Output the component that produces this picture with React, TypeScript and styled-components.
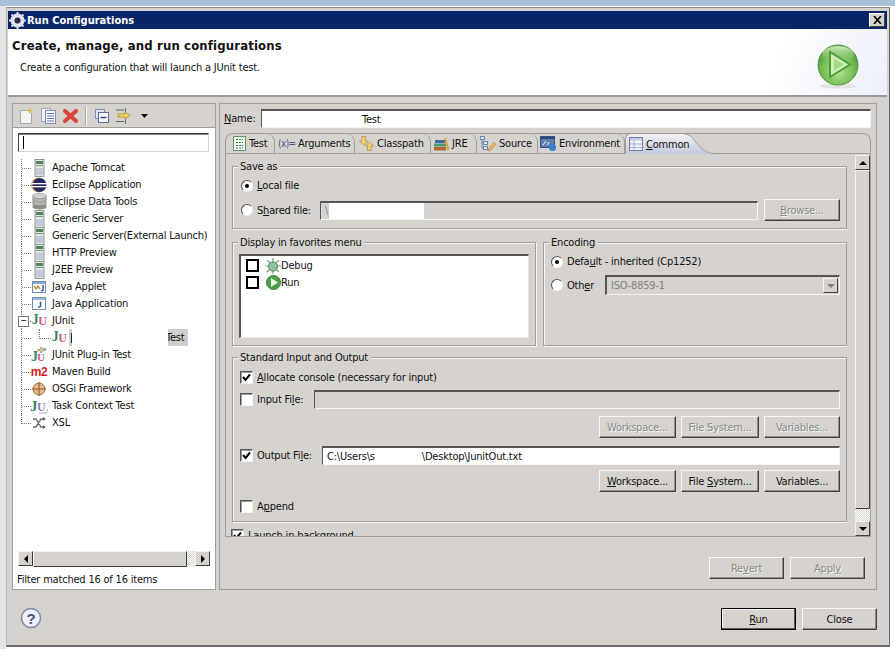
import React from 'react';
import styled, { createGlobalStyle } from 'styled-components';

const FACE = '#d6d3ce';
const EDGE = '#a09f9a';

const GlobalStyle = createGlobalStyle`
  html, body {
    margin: 0;
    width: 895px;
    height: 649px;
    overflow: hidden;
    background: #fff;
  }
  * {
    box-sizing: border-box;
  }
  u {
    text-underline-offset: 1px;
  }
`;

const Page = styled.div`
  width: 895px;
  height: 649px;
  padding: 7px 5px 2px 6px;
  background: linear-gradient(#a9c2da 0 6px, transparent 6px),
    linear-gradient(90deg, #e3e3e1 0 6px, transparent 6px);
  font: 11px 'DejaVu Sans Condensed', 'DejaVu Sans', sans-serif;
  letter-spacing: -0.2px;
  color: #111;
`;

const Window = styled.div`
  height: 100%;
  display: flex;
  flex-direction: column;
  padding: 3px 2px 0 1px;
  background: ${FACE};
  border: 1px solid #6b6b6b;
  border-left-color: #b9b9b9;
  border-top-color: #8b8b8b;
  border-bottom-width: 2px;
`;

const TitleBar = styled.div`
  height: 18px;
  flex: none;
  display: flex;
  align-items: center;
  gap: 1px;
  padding: 0 2px 0 1px;
  background: #0a2468;
  color: #fff;
  font-weight: bold;
  letter-spacing: 0;
`;

const TitleText = styled.span`
  flex: 1;
`;

const CloseBox = styled.div`
  width: 16px;
  height: 14px;
  display: flex;
  align-items: center;
  justify-content: center;
  background: ${FACE};
  border: 1px solid;
  border-color: #fff #404040 #404040 #fff;
`;

const Banner = styled.div`
  height: 68px;
  flex: none;
  display: flex;
  align-items: flex-start;
  justify-content: space-between;
  padding: 8px 26px 0 4px;
  background: linear-gradient(115deg, #fff 0 86%, #eceef9 100%);
  border-bottom: 2px solid #9a9a96;
`;

const BannerText = styled.div`
  display: flex;
  flex-direction: column;
`;

const BannerTitle = styled.div`
  font-weight: bold;
  font-size: 13px;
  line-height: 17px;
  letter-spacing: 0.15px;
`;

const BannerDesc = styled.div`
  margin: 6px 0 0 8px;
  line-height: 15px;
`;

const BadgeSlot = styled.div`
  margin-top: 6px;
  line-height: 0;
`;

const Main = styled.div`
  height: 487px;
  flex: none;
  display: flex;
  gap: 3px;
  margin: 6px 10px 0 4px;
`;

const LeftPanel = styled.div`
  width: 204px;
  flex: none;
  display: flex;
  flex-direction: column;
  background: #fff;
  border: 1px solid ${EDGE};
`;

const ToolBar = styled.div`
  height: 24px;
  flex: none;
  display: flex;
  align-items: center;
  padding-left: 6px;
  background: ${FACE};
  border-bottom: 1px solid ${EDGE};
`;

const ToolSlot = styled.span<{ $width: number }>`
  width: ${(p) => p.$width}px;
  flex: none;
  display: flex;
  align-items: center;
`;

const ToolSep = styled.span`
  width: 2px;
  height: 20px;
  flex: none;
  margin: 0 8px 0 6px;
  background: linear-gradient(90deg, #a9a8a4 50%, #fff 50%);
`;

const FilterInput = styled.div`
  height: 19px;
  flex: none;
  margin: 5px 6px 0 5px;
  padding: 2px 0 0 4px;
  border: 1px solid;
  border-color: #3e3e3e #d6d3ce #d6d3ce #3e3e3e;
  box-shadow: inset 0 1px 0 #808080;
`;

const Caret = styled.span`
  display: block;
  width: 1px;
  height: 13px;
  background: #000;
`;

const Tree = styled.div`
  flex: 1;
  min-height: 0;
  padding: 7px 0 0 8px;
`;

const TreeRow = styled.div`
  height: 17px;
  display: flex;
  align-items: center;
  white-space: nowrap;
`;

const Connector = styled.div<{ $last?: boolean; $expander?: boolean; $width?: number }>`
  position: relative;
  width: ${(p) => p.$width ?? 10}px;
  height: 17px;
  flex: none;
  border-left: 1px dotted #777;
  border-left-style: ${(p) => (p.$last ? 'none' : 'dotted')};

  &::after {
    content: '';
    display: block;
    height: 9px;
    border-bottom: 1px dotted #777;
    border-left: ${(p) => (p.$last ? '1px dotted #777' : 'none')};
  }

  ${(p) =>
    p.$expander &&
    `&::before {
      content: '−';
      position: absolute;
      left: -4px;
      top: 4px;
      width: 9px;
      height: 9px;
      background: #fff;
      border: 1px solid #777;
      font-size: 9px;
      line-height: 7px;
      text-align: center;
    }`}
`;

const TreeIcon = styled.span`
  width: 16px;
  height: 17px;
  flex: none;
  display: flex;
  align-items: center;
  justify-content: center;
  margin-right: 5px;

  & > * {
    flex: none;
  }
`;

const TreeIndent = styled.span`
  width: 8px;
  flex: none;
`;

const GapLabel = styled.span`
  display: flex;
  align-items: center;
  height: 17px;
  margin-left: -3px;
`;

const SelectMark = styled.span`
  width: 3px;
  height: 17px;
  background: linear-gradient(#222, #222) 2px 4px / 1px 10px no-repeat, #cfcecb;
`;

const SelectGap = styled.span`
  width: 96px;
`;

const SelectTail = styled.span`
  width: 20px;
  height: 17px;
  line-height: 17px;
  overflow: hidden;
  text-indent: -2px;
  background: #cfcecb;
`;

const HScroll = styled.div`
  height: 16px;
  flex: none;
  display: flex;
  margin: 0 5px 0 5px;
`;

const ScrollButton = styled.div`
  width: 15px;
  height: 15px;
  flex: none;
  display: flex;
  align-items: center;
  justify-content: center;
  background: ${FACE};
  border: 1px solid;
  border-color: #f4f3f1 #404040 #404040 #f4f3f1;
`;

const ScrollThumb = styled.div`
  flex: 1;
  background: ${FACE};
  border: 1px solid;
  border-color: #f4f3f1 #404040 #404040 #f4f3f1;
`;

const ScrollTrack = styled.div<{ $size: number; $vertical?: boolean }>`
  ${(p) => (p.$vertical ? 'height' : 'width')}: ${(p) => p.$size}px;
  flex: none;
  background: repeating-conic-gradient(#d6d3ce 0 25%, #fff 0 50%) 0 0 / 2px 2px;
`;

const FilterStatus = styled.div`
  height: 22px;
  flex: none;
  padding: 5px 0 0 4px;
  line-height: 15px;
`;

const RightPanel = styled.div`
  flex: 1;
  min-width: 0;
  display: flex;
  flex-direction: column;
  padding: 5px 5px 0 5px;
  border: 1px solid ${EDGE};
`;

const NameRow = styled.div`
  height: 19px;
  flex: none;
  display: flex;
  align-items: center;
  margin-left: -1px;
`;

const NameLabel = styled.span`
  width: 37px;
  flex: none;
`;

const TextField = styled.div<{ $disabled?: boolean; $width?: number; $pad?: number }>`
  height: 19px;
  display: flex;
  align-items: center;
  ${(p) => (p.$width ? `width: ${p.$width}px; flex: none;` : 'flex: 1; min-width: 0;')}
  padding-left: ${(p) => p.$pad ?? 4}px;
  background: ${(p) => (p.$disabled ? FACE : '#fff')};
  color: ${(p) => (p.$disabled ? '#808080' : '#111')};
  border: 1px solid;
  border-color: #555 #f5f5f3 #f5f5f3 #555;
  border-top-width: 2px;
  white-space: nowrap;
  overflow: hidden;
`;

const MaskBlock = styled.span`
  width: 95px;
  height: 16px;
  flex: none;
  margin-left: 1px;
  background: #fff;
`;

const OutputGap = styled.span`
  width: 47px;
  flex: none;
`;

const Folder = styled.div`
  height: 404px;
  flex: none;
  display: flex;
  flex-direction: column;
  margin-top: 5px;
  border: 1px solid ${EDGE};
  border-top: none;
  border-radius: 8px 8px 0 0;
`;

const TabStrip = styled.div`
  height: 21px;
  flex: none;
  display: flex;
  align-items: stretch;
  border: 1px solid ${EDGE};
  border-width: 1px 0 1px 0;
  border-radius: 8px 8px 0 0;
`;

const Tab = styled.div<{ $width: number; $pad: number }>`
  width: ${(p) => p.$width}px;
  flex: none;
  display: flex;
  align-items: center;
  gap: 3px;
  padding-left: ${(p) => p.$pad}px;
  white-space: nowrap;
  border-right: 1px solid ${EDGE};
  border-top-right-radius: 8px;
`;

const ActiveTab = styled.div`
  position: relative;
  width: 60px;
  flex: none;
  display: flex;
  align-items: center;
  gap: 3px;
  margin: -1px 0 -1px 0;
  padding-left: 3px;
  border-left: 1px solid ${EDGE};
  border-top: 1px solid ${EDGE};
  border-top-left-radius: 6px;
  background: linear-gradient(#f2f2f4, #c4c8dc);

  & > svg {
    flex: none;
  }
`;

const ActiveLabel = styled.span`
  position: relative;
  z-index: 1;
  flex: none;
  white-space: nowrap;
`;

const TabTail = styled.svg`
  position: absolute;
  left: 58px;
  top: -1px;
`;

const FolderBody = styled.div`
  flex: 1;
  min-height: 0;
  display: flex;
  gap: 8px;
  padding: 1px 0 0 0;
`;

const ScrollArea = styled.div`
  flex: 1;
  min-width: 0;
  overflow: hidden;
  padding: 11px 0 0 6px;
`;

const VScroll = styled.div`
  width: 15px;
  flex: none;
  display: flex;
  flex-direction: column;
`;

const Group = styled.div<{ $height: number; $top?: number; $width?: number; $padLeft?: number }>`
  position: relative;
  height: ${(p) => p.$height}px;
  margin-top: ${(p) => p.$top ?? 0}px;
  ${(p) => (p.$width ? `width: ${p.$width}px; flex: none;` : 'flex: 1; min-width: 0;')}
  padding: 9px 6px 0 ${(p) => p.$padLeft ?? 8}px;
  border: 1px solid ${EDGE};
  box-shadow: 1px 1px 0 #f6f6f4, inset 1px 1px 0 #f6f6f4;
`;

const Legend = styled.span`
  position: absolute;
  left: 5px;
  top: -8px;
  padding: 0 3px 0 2px;
  line-height: 15px;
  background: ${FACE};
`;

const GroupPair = styled.div`
  display: flex;
  gap: 7px;
  margin-top: 13px;
`;

const OptionRow = styled.div<{ $height?: number; $top?: number }>`
  height: ${(p) => p.$height ?? 19}px;
  margin-top: ${(p) => p.$top ?? 0}px;
  display: flex;
  align-items: center;
  white-space: nowrap;
`;

const Radio = styled.span<{ $on?: boolean }>`
  width: 12px;
  height: 12px;
  flex: none;
  margin-right: 4px;
  border-radius: 50%;
  display: flex;
  align-items: center;
  justify-content: center;
  background: #fff;
  border: 1px solid;
  border-color: #555 #f4f4f2 #f4f4f2 #555;

  &::after {
    content: '';
    display: ${(p) => (p.$on ? 'block' : 'none')};
    width: 4px;
    height: 4px;
    border-radius: 50%;
    background: #000;
  }
`;

const Check = styled.span`
  width: 13px;
  height: 13px;
  flex: none;
  margin: 0 4px 0 -1px;
  display: flex;
  align-items: center;
  justify-content: center;
  background: #fff;
  border: 1px solid;
  border-color: #555 #f4f4f2 #f4f4f2 #555;
  box-shadow: inset 1px 1px 0 #999;
`;

const FieldLabel = styled.span<{ $width: number }>`
  width: ${(p) => p.$width}px;
  flex: none;
`;

const FavoritesList = styled.div`
  height: 84px;
  width: 290px;
  margin: 2px 0 0 -2px;
  padding: 1px 0 0 5px;
  background: #fff;
  border: 1px solid;
  border-color: #555 #e8e8e6 #e8e8e6 #555;
  border-top-width: 2px;
  border-left-width: 2px;
`;

const FavRow = styled.div`
  height: 17px;
  display: flex;
  align-items: center;
`;

const FavBox = styled.span`
  width: 13px;
  height: 13px;
  flex: none;
  margin-right: 6px;
  border: 2px solid #000;
`;

const FavIcon = styled.span`
  width: 16px;
  height: 16px;
  flex: none;
  display: flex;
  align-items: center;
  justify-content: center;
`;

const Combo = styled.div`
  width: 235px;
  height: 20px;
  flex: none;
  display: flex;
  align-items: center;
  justify-content: space-between;
  padding: 0 1px 0 4px;
  color: #808080;
  border: 1px solid;
  border-color: #555 #f5f5f3 #f5f5f3 #555;
  border-top-width: 2px;
  border-left-width: 2px;
`;

const ComboArrow = styled.span`
  width: 15px;
  height: 15px;
  display: flex;
  align-items: center;
  justify-content: center;
  border: 1px solid;
  border-color: #f4f3f1 #404040 #404040 #f4f3f1;
`;

const ButtonRow = styled.div<{ $top?: number }>`
  display: flex;
  justify-content: flex-end;
  gap: 5px;
  margin-top: ${(p) => p.$top ?? 0}px;
`;

const Button = styled.button<{ $disabled?: boolean; $primary?: boolean; $width?: number; $left?: number }>`
  width: ${(p) => p.$width ?? 76}px;
  height: 22px;
  flex: none;
  margin-left: ${(p) => p.$left ?? 0}px;
  padding: 0;
  background: ${FACE};
  font: inherit;
  letter-spacing: inherit;
  color: ${(p) => (p.$disabled ? '#8a8a86' : '#111')};
  text-shadow: ${(p) => (p.$disabled ? '1px 1px 0 #f4f4f2' : 'none')};
  border: 1px solid;
  border-color: ${(p) => (p.$primary ? '#000' : '#f6f6f4 #404040 #404040 #f6f6f4')};
  box-shadow: ${(p) => (p.$primary ? 'inset -1px -1px 0 #555, inset 1px 1px 0 #f6f6f4' : 'inset -1px -1px 0 #8c8b87')};
`;

const ApplyRow = styled.div`
  display: flex;
  justify-content: flex-end;
  gap: 6px;
  margin: 20px 6px 0 0;
`;

const Footer = styled.div`
  flex: 1;
  display: flex;
  align-items: flex-start;
  justify-content: space-between;
  padding: 18px 10px 0 12px;
`;

const FooterButtons = styled.div`
  display: flex;
  gap: 6px;
`;

const HelpSlot = styled.div`
  margin-top: -1px;
  line-height: 0;
`;

const JuMark = styled.span`
  display: inline-flex;
  font: bold 13px 'Liberation Serif', serif;
  letter-spacing: -0.5px;

  b:first-child {
    color: #35876a;
    font-size: 14px;
  }
  b:last-child {
    color: #c4627a;
    font-size: 12px;
    margin-top: 2px;
  }
`;

const MavenMark = styled.span`
  font: bold 12px 'Liberation Sans', sans-serif;
  color: #d81e1e;
  letter-spacing: -0.5px;
`;

const ArgsMark = styled.span`
  width: 17px;
  flex: none;
  color: #465c8c;
  font-size: 10px;
  letter-spacing: -0.6px;
`;

const Server = () => (
  <svg width="11" height="18" viewBox="0 0 11 18">
    <rect x="1" y="0.5" width="9" height="17" fill="#dfe6df" stroke="#8d9a90" />
    <rect x="2" y="2" width="7" height="3" fill="#57805f" />
    <rect x="2" y="6" width="7" height="1" fill="#7b9480" />
    <rect x="2" y="9" width="7" height="7" fill="#c4c8da" />
  </svg>
);

const EclipseLogo = () => (
  <svg width="16" height="16" viewBox="0 0 16 16">
    <circle cx="7.5" cy="8" r="7.5" fill="#e8a56c" />
    <circle cx="8.5" cy="8" r="7" fill="#27275f" />
    <rect x="1" y="6" width="15" height="1.3" fill="#fff" />
    <rect x="1" y="9" width="15" height="1.3" fill="#fff" />
  </svg>
);

const DataTools = () => (
  <svg width="15" height="17" viewBox="0 0 15 17">
    <rect x="0.5" y="2.5" width="14" height="12" fill="#a8aaa6" />
    <ellipse cx="7.5" cy="14" rx="7" ry="2.6" fill="#8b8d89" />
    <ellipse cx="7.5" cy="10" rx="7" ry="2.6" fill="#b4b6b2" stroke="#7f817d" strokeWidth="0.5" />
    <ellipse cx="7.5" cy="6.5" rx="7" ry="2.6" fill="#b4b6b2" stroke="#7f817d" strokeWidth="0.5" />
    <ellipse cx="7.5" cy="3" rx="7" ry="2.6" fill="#d4d5d2" stroke="#7f817d" strokeWidth="0.5" />
  </svg>
);

const AppletIcon = () => (
  <svg width="14" height="12" viewBox="0 0 14 12">
    <rect x="0.5" y="0.5" width="13" height="11" fill="#fff" stroke="#6f8db3" />
    <rect x="1" y="1" width="12" height="2" fill="#89a7cc" />
    <path d="M2 5 L4 8 L6 5 L8 8" fill="none" stroke="#b9902f" strokeWidth="1.4" />
    <path d="M11 4 V9 Q11 10 9 10" fill="none" stroke="#2c4f86" strokeWidth="1.4" />
  </svg>
);

const JavaAppIcon = () => (
  <svg width="14" height="13" viewBox="0 0 14 13">
    <rect x="0.5" y="0.5" width="13" height="12" fill="#fff" stroke="#6f8db3" />
    <rect x="1" y="1" width="12" height="2" fill="#9ab5d5" />
    <path d="M8.5 4.5 V9 Q8.5 10.5 6 10" fill="none" stroke="#2c5d98" strokeWidth="1.5" />
  </svg>
);

const PluginJu = () => (
  <svg width="16" height="17" viewBox="0 0 16 17">
    <text x="0" y="15" fontFamily="Liberation Serif" fontWeight="bold" fontSize="14" fill="#35876a">J</text>
    <text x="6" y="15" fontFamily="Liberation Serif" fontWeight="bold" fontSize="11" fill="#c4627a">U</text>
    <path d="M6 4 H9" stroke="#8a8a6a" />
    <path d="M10 1 L13 4 L10 7 L8 4 Z" fill="#e7c76b" stroke="#8a8a6a" strokeWidth="0.6" />
    <circle cx="13.5" cy="3.5" r="1.8" fill="#8fa9d6" />
  </svg>
);

const Osgi = () => (
  <svg width="14" height="14" viewBox="0 0 14 14">
    <circle cx="7" cy="7" r="6" fill="#e1b98a" stroke="#a36a35" />
    <path d="M7 0 V14 M0 7 H14" stroke="#8f5a2a" />
  </svg>
);

const TaskJu = () => (
  <svg width="18" height="16" viewBox="0 0 18 16">
    <text x="0" y="13" fontFamily="Liberation Serif" fontWeight="bold" fontSize="15" fill="#35876a">J</text>
    <text x="7" y="13" fontFamily="Liberation Serif" fontWeight="bold" fontSize="12" fill="#8c7bb6">U</text>
    <path d="M9 15 H16 L18 11" fill="none" stroke="#b3a6d1" />
  </svg>
);

const Xsl = () => (
  <svg width="14" height="12" viewBox="0 0 14 12">
    <path d="M1 2 H4 L9 10 H13 M1 10 H4 L9 2 H13" fill="none" stroke="#6b6b68" strokeWidth="1.4" />
    <path d="M11 0 L14 2 L11 4 Z M11 8 L14 10 L11 12 Z" fill="#6b6b68" />
  </svg>
);

const AppIcon = () => (
  <svg width="17" height="17" viewBox="0 0 17 17">
    <circle cx="8.5" cy="8.5" r="5.5" fill="#d9dbe8" stroke="#e8e8f0" strokeWidth="3" />
    <circle cx="8.5" cy="8.5" r="3" fill="#2a2a44" />
    <path d="M8.5 0 V4 M8.5 13 V17 M0 8.5 H4 M13 8.5 H17 M2.500 2.500 L5 5 M14.500 2.500 L12 5 M2.500 14.500 L5 12 M14.500 14.500 L12 12" stroke="#d9dbe8" strokeWidth="2" />
  </svg>
);

const ToolNew = () => (
  <svg width="14" height="16" viewBox="0 0 14 16">
    <path d="M1.5 2.5 H9 L12.5 6 V15.5 H1.5 Z" fill="#f6f6f0" stroke="#9fa8b8" />
    <path d="M11 0 V5 M8.5 2.5 H13.5" stroke="#e3c04b" strokeWidth="1.3" />
  </svg>
);

const ToolCopy = () => (
  <svg width="15" height="16" viewBox="0 0 15 16">
    <rect x="0.5" y="0.5" width="9" height="13" fill="#f0f2f8" stroke="#9fa8b8" />
    <rect x="4.5" y="2.5" width="10" height="13" fill="#f6f7fb" stroke="#8090b0" />
    <path d="M6 5.5 H13 M6 8 H13 M6 10.5 H13 M6 13 H13" stroke="#5b78b5" />
  </svg>
);

const ToolDelete = () => (
  <svg width="15" height="14" viewBox="0 0 15 14">
    <path d="M2 2 L13 12 M13 2 L2 12" stroke="#d9453d" strokeWidth="4" strokeLinecap="round" />
  </svg>
);

const ToolCollapse = () => (
  <svg width="14" height="14" viewBox="0 0 14 14">
    <rect x="0.5" y="0.5" width="9" height="9" fill="#dfe5f0" stroke="#7d93b8" />
    <rect x="3.5" y="3.5" width="10" height="10" fill="#f4f6fa" stroke="#566f9c" />
    <path d="M5.5 8.5 H11.5" stroke="#2d3f66" strokeWidth="1.4" />
  </svg>
);

const ToolFilter = () => (
  <svg width="17" height="16" viewBox="0 0 17 16">
    <path d="M0 2 H8 M0 13.500 H8 M9.500 0 V4 M9.500 11 V16" stroke="#5b6675" />
    <path d="M2 6 H9 V4 L14 7.500 L9 11 V9 H2 Z" fill="#f0d468" stroke="#a88a2a" strokeWidth="0.8" />
  </svg>
);

const DownCaret = () => (
  <svg width="7" height="4" viewBox="0 0 7 4">
    <path d="M0 0 H7 L3.500 4 Z" fill="#111" />
  </svg>
);

const Arrow = ({ dir, color = '#000' }: { dir: 'up' | 'down' | 'left' | 'right'; color?: string }) => {
  const d = {
    up: 'M0 6 H8 L4 2 Z',
    down: 'M0 2 H8 L4 6 Z',
    left: 'M6 0 V8 L2 4 Z',
    right: 'M2 0 V8 L6 4 Z',
  }[dir];
  return (
    <svg width="8" height="8" viewBox="0 0 8 8">
      <path d={d} fill={color} />
    </svg>
  );
};

const TabTest = () => (
  <svg width="13" height="15" viewBox="0 0 13 15">
    <rect x="0.5" y="0.5" width="12" height="14" fill="#f2f7ee" stroke="#5c9a6b" />
    <path d="M3 3.500 H10 M3 6.500 H10 M3 9.500 H10 M3 12 H10" stroke="#42785a" strokeDasharray="2 1" />
  </svg>
);

const TabClasspath = () => (
  <svg width="15" height="15" viewBox="0 0 16 15">
    <path d="M3 0 H7 V5 H9.500 L5 9 L0.500 5 H3 Z" fill="#f3cf6b" stroke="#a38a35" strokeWidth="0.7" />
    <path d="M9 15 H13 V10 H15.500 L11 6 L6.500 10 H9 Z" fill="#f3cf6b" stroke="#a38a35" strokeWidth="0.7" />
  </svg>
);

const TabJre = () => (
  <svg width="15" height="14" viewBox="0 0 15 14">
    <rect x="0" y="10" width="12" height="3.500" fill="#b16b39" />
    <rect x="0" y="6.500" width="12" height="3" fill="#4e9a70" />
    <rect x="1" y="3" width="10" height="3" fill="#3d6aa5" />
    <path d="M11 1 L14.500 13.500" stroke="#d4a93a" strokeWidth="2" />
  </svg>
);

const TabSource = () => (
  <svg width="16" height="16" viewBox="0 0 16 16">
    <rect x="0.5" y="0.5" width="4" height="3" fill="#dfe6f2" stroke="#6d84ab" />
    <rect x="3.500" y="5.500" width="4" height="3" fill="#dfe6f2" stroke="#6d84ab" />
    <rect x="3.500" y="10.500" width="4" height="3" fill="#dfe6f2" stroke="#6d84ab" />
    <path d="M2 4 V12 H3.500 M2 7 H3.500" stroke="#6d84ab" fill="none" />
    <path d="M8 15 L9 12 L14 6.500 L16 8.500 L11 14 Z" fill="#efb45d" stroke="#a8793a" strokeWidth="0.6" />
  </svg>
);

const TabEnv = () => (
  <svg width="16" height="15" viewBox="0 0 16 15">
    <rect x="0.5" y="0.5" width="14" height="11" fill="#5f7fae" stroke="#37537f" />
    <rect x="1" y="1" width="13" height="2" fill="#2c4a78" />
    <path d="M3 9 L6 5 M7 9 L9 6" stroke="#fff" />
    <circle cx="12.500" cy="11.500" r="3.500" fill="#3b7ecb" />
  </svg>
);

const TabCommon = () => (
  <svg width="14" height="14" viewBox="0 0 14 14">
    <rect x="0.5" y="0.5" width="13" height="13" fill="#f1f3fa" stroke="#6d7ea3" />
    <rect x="1" y="1" width="12" height="2.500" fill="#c2cde5" />
    <path d="M1 7 H13 M1 10.500 H13 M5 3 V13" stroke="#a3b1d1" />
  </svg>
);

const DebugBug = () => (
  <svg width="16" height="16" viewBox="0 0 16 16">
    <path d="M8 0 V16 M0 8 H16 M2 2 L14 14 M14 2 L2 14" stroke="#7f9f6e" strokeWidth="1.2" />
    <circle cx="8" cy="8.500" r="4.500" fill="#8ec2a8" stroke="#4e7f63" />
  </svg>
);

const PlayMini = () => (
  <svg width="15" height="15" viewBox="0 0 15 15">
    <circle cx="7.500" cy="7.500" r="7" fill="#4ba14b" stroke="#38813a" />
    <path d="M5 3 V12 L12 7.500 Z" fill="#eef7ec" />
  </svg>
);

const PlayBadge = () => (
  <svg width="46" height="48" viewBox="0 0 46 48">
    <defs>
      <radialGradient id="playFill" cx="50%" cy="65%" r="60%">
        <stop offset="0%" stopColor="#b9e39a" />
        <stop offset="65%" stopColor="#75bd55" />
        <stop offset="100%" stopColor="#4c9a3c" />
      </radialGradient>
      <linearGradient id="playShine" x1="0" y1="0" x2="0" y2="1">
        <stop offset="0%" stopColor="#d7efc3" />
        <stop offset="100%" stopColor="#86c768" stopOpacity="0" />
      </linearGradient>
    </defs>
    <ellipse cx="23" cy="43" rx="18" ry="2.500" fill="#e3e3e0" />
    <circle cx="23" cy="22" r="20" fill="url(#playFill)" stroke="#4f9445" strokeWidth="1" />
    <ellipse cx="23" cy="12" rx="16" ry="9" fill="url(#playShine)" />
    <path d="M15 9 V34 L35 21.500 Z" fill="#cfeeb8" stroke="#4f9d3e" strokeWidth="2" />
    <path d="M19 15.500 V27.500 L29 21.500 Z" fill="#a4d986" />
  </svg>
);

const Help = () => (
  <svg width="22" height="22" viewBox="0 0 22 22">
    <circle cx="11" cy="11" r="9.500" fill="#eef0f7" stroke="#7f88a8" strokeWidth="1.500" />
    <text x="11" y="16.500" textAnchor="middle" fontFamily="Liberation Sans" fontWeight="bold" fontSize="15" fill="#4a5273">?</text>
  </svg>
);

const TickMark = () => (
  <svg width="9" height="9" viewBox="0 0 9 9">
    <path d="M1 4 L3.500 7 L8 1.500" fill="none" stroke="#000" strokeWidth="2" />
  </svg>
);

const Ju = () => (
  <JuMark>
    <b>J</b>
    <b>U</b>
  </JuMark>
);

const treeItems: { label: string; icon: React.ReactNode }[] = [
  { label: 'Apache Tomcat', icon: <Server /> },
  { label: 'Eclipse Application', icon: <EclipseLogo /> },
  { label: 'Eclipse Data Tools', icon: <DataTools /> },
  { label: 'Generic Server', icon: <Server /> },
  { label: 'Generic Server(External Launch)', icon: <Server /> },
  { label: 'HTTP Preview', icon: <Server /> },
  { label: 'J2EE Preview', icon: <Server /> },
  { label: 'Java Applet', icon: <AppletIcon /> },
  { label: 'Java Application', icon: <JavaAppIcon /> },
];

const treeItemsAfter: { label: string; icon: React.ReactNode; last?: boolean }[] = [
  { label: 'JUnit Plug-in Test', icon: <PluginJu /> },
  { label: 'Maven Build', icon: <MavenMark>m2</MavenMark> },
  { label: 'OSGi Framework', icon: <Osgi /> },
  { label: 'Task Context Test', icon: <TaskJu /> },
  { label: 'XSL', icon: <Xsl />, last: true },
];

const TreeItem = ({ label, icon, last }: { label: string; icon: React.ReactNode; last?: boolean }) => (
  <TreeRow>
    <Connector $last={last} />
    <TreeIcon>{icon}</TreeIcon>
    {label}
  </TreeRow>
);

export default function App() {
  return (
    <Page>
      <GlobalStyle />
      <Window>
        <TitleBar>
          <AppIcon />
          <TitleText>Run Configurations</TitleText>
          <CloseBox>
            <svg width="9" height="8" viewBox="0 0 9 8">
              <path d="M1 0 L8 8 M8 0 L1 8" stroke="#000" strokeWidth="1.700" />
            </svg>
          </CloseBox>
        </TitleBar>
        <Banner>
          <BannerText>
            <BannerTitle>Create, manage, and run configurations</BannerTitle>
            <BannerDesc>Create a configuration that will launch a JUnit test.</BannerDesc>
          </BannerText>
          <BadgeSlot>
            <PlayBadge />
          </BadgeSlot>
        </Banner>
        <Main>
          <LeftPanel>
            <ToolBar>
              <ToolSlot $width={22}><ToolNew /></ToolSlot>
              <ToolSlot $width={22}><ToolCopy /></ToolSlot>
              <ToolSlot $width={16}><ToolDelete /></ToolSlot>
              <ToolSep />
              <ToolSlot $width={21}><ToolCollapse /></ToolSlot>
              <ToolSlot $width={25}><ToolFilter /></ToolSlot>
              <DownCaret />
            </ToolBar>
            <FilterInput>
              <Caret />
            </FilterInput>
            <Tree>
              {treeItems.map((item) => (
                <TreeItem key={item.label} label={item.label} icon={item.icon} />
              ))}
              <TreeRow>
                <Connector $expander />
                <TreeIcon><Ju /></TreeIcon>
                JUnit
              </TreeRow>
              <TreeRow>
                <Connector />
                <TreeIndent />
                <Connector $last $width={12} />
                <TreeIcon><Ju /></TreeIcon>
                <GapLabel>
                  <SelectMark />
                  <SelectGap />
                  <SelectTail>Test</SelectTail>
                </GapLabel>
              </TreeRow>
              {treeItemsAfter.map((item) => (
                <TreeItem key={item.label} label={item.label} icon={item.icon} last={item.last} />
              ))}
            </Tree>
            <HScroll>
              <ScrollButton><Arrow dir="left" /></ScrollButton>
              <ScrollThumb />
              <ScrollTrack $size={8} />
              <ScrollButton><Arrow dir="right" /></ScrollButton>
            </HScroll>
            <FilterStatus>Filter matched 16 of 16 items</FilterStatus>
          </LeftPanel>
          <RightPanel>
            <NameRow>
              <NameLabel><u>N</u>ame:</NameLabel>
              <TextField $pad={100}>Test</TextField>
            </NameRow>
            <Folder>
              <TabStrip>
                <Tab $width={49} $pad={7}><TabTest />Test</Tab>
                <Tab $width={80} $pad={3}><ArgsMark>(x)=</ArgsMark>Arguments</Tab>
                <Tab $width={76} $pad={4}><TabClasspath />Classpath</Tab>
                <Tab $width={46} $pad={3}><TabJre />JRE</Tab>
                <Tab $width={61} $pad={3}><TabSource />Source</Tab>
                <Tab $width={87} $pad={2}><TabEnv />Environment</Tab>
                <ActiveTab>
                  <TabCommon />
                  <ActiveLabel><u>C</u>ommon</ActiveLabel>
                  <TabTail width="30" height="22" viewBox="0 0 30 22">
                    <defs>
                      <linearGradient id="tailFill" x1="0" y1="0" x2="0" y2="1">
                        <stop offset="0%" stopColor="#f2f2f4" />
                        <stop offset="100%" stopColor="#c4c8dc" />
                      </linearGradient>
                    </defs>
                    <path d="M0 1 C8 1 10 8 16 14 C20 18 25 20 30 21 L0 21 Z" fill="url(#tailFill)" />
                    <path d="M0 1 C8 1 10 8 16 14 C20 18 25 20 30 21" fill="none" stroke={EDGE} />
                  </TabTail>
                </ActiveTab>
              </TabStrip>
              <FolderBody>
                <ScrollArea>
                  <Group $height={63}>
                    <Legend>Save as</Legend>
                    <OptionRow><Radio $on /><u>L</u>ocal file</OptionRow>
                    <OptionRow $height={20} $top={5}>
                      <Radio />
                      <FieldLabel $width={63}>S<u>h</u>ared file:</FieldLabel>
                      <TextField $disabled $width={438} $pad={4}>\<MaskBlock /></TextField>
                      <Button $disabled $left={6}><u>B</u>rowse...</Button>
                    </OptionRow>
                  </Group>
                  <GroupPair>
                    <Group $height={104} $width={304}>
                      <Legend>Display in favorites menu</Legend>
                      <FavoritesList>
                        <FavRow><FavBox /><FavIcon><DebugBug /></FavIcon>Debug</FavRow>
                        <FavRow><FavBox /><FavIcon><PlayMini /></FavIcon>Run</FavRow>
                      </FavoritesList>
                    </Group>
                    <Group $height={104} $padLeft={7}>
                      <Legend>Encoding</Legend>
                      <OptionRow><Radio $on />Defa<u>u</u>lt - inherited (Cp1252)</OptionRow>
                      <OptionRow $top={4} $height={20}>
                        <Radio />
                        <FieldLabel $width={38}>Oth<u>e</u>r</FieldLabel>
                        <Combo>ISO-8859-1<ComboArrow><Arrow dir="down" color="#808080" /></ComboArrow></Combo>
                      </OptionRow>
                    </Group>
                  </GroupPair>
                  <Group $height={165} $top={11}>
                    <Legend>Standard Input and Output</Legend>
                    <OptionRow $height={20}><Check><TickMark /></Check><u>A</u>llocate console (necessary for input)</OptionRow>
                    <OptionRow $top={3}><Check /><FieldLabel $width={57}>Input Fi<u>l</u>e:</FieldLabel><TextField $disabled /></OptionRow>
                    <ButtonRow $top={7}>
                      <Button $disabled $width={77}>Workspace...</Button>
                      <Button $disabled $width={78}>File System...</Button>
                      <Button $disabled>Variables...</Button>
                    </ButtonRow>
                    <OptionRow $top={8}><Check><TickMark /></Check><FieldLabel $width={65}>Output Fi<u>l</u>e:</FieldLabel><TextField>C:\Users\s<OutputGap />\Desktop\JunitOut.txt</TextField></OptionRow>
                    <ButtonRow $top={5}>
                      <Button $width={77}><u>W</u>orkspace...</Button>
                      <Button $width={78}>File <u>S</u>ystem...</Button>
                      <Button>Variables...</Button>
                    </ButtonRow>
                    <OptionRow $top={5}><Check />A<u>p</u>pend</OptionRow>
                  </Group>
                  <OptionRow $top={6} $height={15}><Check><TickMark /></Check>Launch in background</OptionRow>
                </ScrollArea>
                <VScroll>
                  <ScrollButton><Arrow dir="up" /></ScrollButton>
                  <ScrollThumb />
                  <ScrollTrack $size={12} $vertical />
                  <ScrollButton><Arrow dir="down" /></ScrollButton>
                </VScroll>
              </FolderBody>
            </Folder>
            <ApplyRow>
              <Button $disabled $width={75}>Re<u>v</u>ert</Button>
              <Button $disabled $width={75}>Appl<u>y</u></Button>
            </ApplyRow>
          </RightPanel>
        </Main>
        <Footer>
          <HelpSlot>
            <Help />
          </HelpSlot>
          <FooterButtons>
            <Button $primary $width={75}><u>R</u>un</Button>
            <Button $width={75}>Close</Button>
          </FooterButtons>
        </Footer>
      </Window>
    </Page>
  );
}
